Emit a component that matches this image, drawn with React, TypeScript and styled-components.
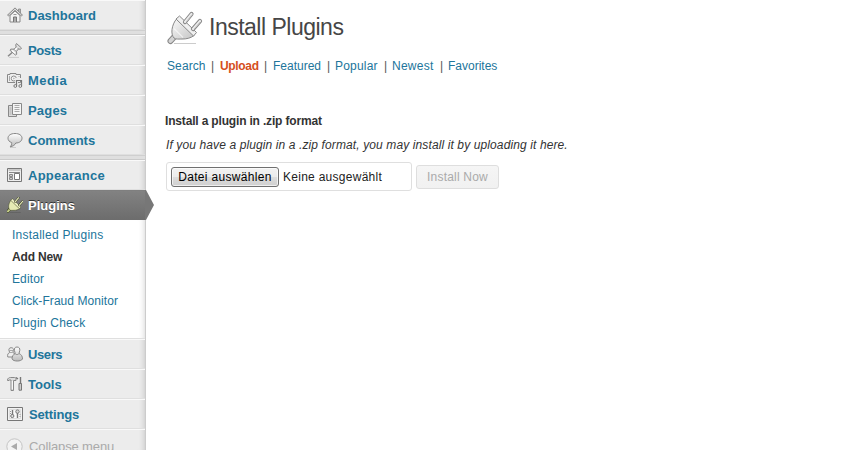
import React from "react";
import styled, { createGlobalStyle, css } from "styled-components";

const GlobalStyle = createGlobalStyle`
  html, body { margin: 0; padding: 0; height: 100%; overflow: hidden; background: #fff; }
  body { font: 12px "Liberation Sans", Arial, sans-serif; color: #333; }
  button { font-family: inherit; }
  a { color: #21759b; text-decoration: none; }
`;

const Shell = styled.div`
  display: flex;
  width: 843px;
  height: 450px;
  overflow: hidden;
`;

const Sidebar = styled.nav`
  box-sizing: border-box;
  flex: 0 0 146px;
  min-width: 0;
  height: 450px;
  background: #ececec;
  border-right: 1px solid #ccc;
  box-shadow: inset -6px 0 6px -6px rgba(0, 0, 0, 0.2);
`;

const MenuRow = styled.a<{ $current?: boolean }>`
  box-sizing: border-box;
  position: relative;
  display: flex;
  align-items: center;
  height: 30px;
  padding: 1px 0 0 7px;
  border-top: 1px solid #f9f9f9;
  border-bottom: 1px solid #dfdfdf;
  font-size: 13px;
  font-weight: bold;
  ${(p) =>
    p.$current &&
    css`
      width: 146px;
      color: #fff;
      background: linear-gradient(#828282, #6d6d6d);
      border-top-color: #7f7f7f;
      border-bottom-color: #6d6d6d;
      text-shadow: 0 -1px 0 #333;
    `}
`;

const Pointer = styled.svg`
  position: absolute;
  left: 145px;
  top: -1px;
`;

const IconSlot = styled.span`
  display: flex;
  flex: 0 0 21px;
  height: 16px;
  margin-bottom: 1px;
`;

const Label = styled.span<{ $spacing?: number; $shift?: number }>`
  letter-spacing: ${(p) => p.$spacing ?? 0}px;
  padding-left: ${(p) => p.$shift ?? 0}px;
  white-space: nowrap;
`;

const Separator = styled.div`
  box-sizing: border-box;
  height: 5px;
  background: #dfdfdf;
  border-top: 1px solid #cfcfcf;
  border-bottom: 1px solid #cacaca;
`;

const Submenu = styled.div`
  box-sizing: border-box;
  height: 119px;
  padding: 4px 0 0 12px;
  background: #fff;
  border-bottom: 1px solid #dfdfdf;
  box-shadow: inset -6px 0 6px -6px rgba(0, 0, 0, 0.2);
`;

const SubItem = styled.a<{ $current?: boolean; $spacing?: number }>`
  display: block;
  height: 22px;
  line-height: 22px;
  letter-spacing: ${(p) => p.$spacing ?? 0}px;
  ${(p) => p.$current && "color: #333; font-weight: bold;"}
`;

const Collapse = styled.div`
  display: flex;
  align-items: center;
  box-sizing: border-box;
  height: 34px;
  padding: 0 0 1px 6px;
  border-top: 1px solid #f9f9f9;
  color: #aaa;
  font-size: 13px;
  letter-spacing: -0.12px;
`;

const CollapseIcon = styled.svg`
  margin-right: 6px;
`;

const Main = styled.main`
  flex: 1;
  padding: 10px 0 0 18px;
`;

const Header = styled.header`
  display: flex;
  align-items: flex-start;
  height: 46px;
  padding-left: 2px;
`;

const Title = styled.h1`
  margin: 4px 0 0 6px;
  font-size: 23px;
  font-weight: normal;
  line-height: 26px;
  letter-spacing: -0.5px;
  color: #464646;
`;

const Tabs = styled.div`
  display: flex;
  padding-left: 3px;
  height: 20px;
  line-height: 20px;
`;

const Tab = styled.a<{ $width: number; $current?: boolean; $spacing?: number }>`
  width: ${(p) => p.$width}px;
  white-space: nowrap;
  letter-spacing: ${(p) => p.$spacing ?? 0}px;
  ${(p) => p.$current && "color: #d54e21; font-weight: bold;"}
`;

const Divider = styled.span<{ $width?: number }>`
  width: ${(p) => p.$width ?? 9}px;
  color: #555;
`;

const SectionTitle = styled.h4`
  margin: 37px 0 0 1px;
  font-size: 12px;
  line-height: 16px;
  letter-spacing: -0.17px;
`;

const Help = styled.p`
  margin: 8px 0 0 2px;
  line-height: 16px;
  font-style: italic;
  letter-spacing: 0.113px;
`;

const Form = styled.div`
  display: flex;
  align-items: center;
  margin: 9px 0 0 2px;
`;

const FileBox = styled.div`
  box-sizing: border-box;
  display: flex;
  align-items: center;
  width: 246px;
  height: 29px;
  padding-left: 4px;
  border: 1px solid #dfdfdf;
  border-radius: 3px;
  color: #222;
  letter-spacing: 0.27px;
`;

const ChooseButton = styled.button`
  box-sizing: border-box;
  width: 108px;
  height: 20px;
  margin-right: 4px;
  padding: 0;
  border: 1px solid #707070;
  border-radius: 3px;
  background: linear-gradient(#f2f2f2 0%, #ebebeb 50%, #dddddd 51%, #cfcfcf 100%);
  box-shadow: inset 0 0 0 1px rgba(255, 255, 255, 0.65);
  color: #000;
  font-size: 12px;
  line-height: 18px;
  letter-spacing: 0.32px;
  white-space: nowrap;
`;

const InstallButton = styled.button`
  box-sizing: border-box;
  width: 83px;
  height: 24px;
  margin-left: 4px;
  padding: 0;
  border: 1px solid #dedede;
  border-radius: 3px;
  background: linear-gradient(#f5f5f5, #f1f1f1);
  color: #aaa;
  font-size: 12px;
  letter-spacing: 0.2px;
  white-space: nowrap;
`;

const icons: Record<string, React.ReactNode> = {
  home: (
    <>
      <path d="M3 8.5V15h10V8.5L8 4z" fill="#f4f4f4" stroke="#888" />
      <path d="M11.5 2v3l2 1.5V2z" fill="#bbb" stroke="#888" strokeWidth=".8" />
      <path d="M.8 8.8 8 2l7.2 6.8" fill="none" stroke="#888" strokeWidth="2.2" />
      <path d="M1.4 8.2 8 2.2l6.6 6" fill="none" stroke="#f5f5f5" strokeWidth=".9" />
      <path d="M6.5 15v-5h3v5" fill="#aaa" stroke="#777" />
      <path d="M6.5 7.5h3" stroke="#999" />
    </>
  ),
  pin: (
    <>
      <path d="M2 15.4h10" stroke="#ccc" />
      <path d="m1 14.3 5-4.5" stroke="#888" strokeWidth="1.5" />
      <path d="m9.5 1.5 5 4.5-1 1.3-2-.3-2 2.3.2 3-1.2.8L3 8.3l.8-1.2 3.2.1L9.2 5l-.5-2z" fill="#ddd" stroke="#888" />
      <path d="M9.3 4.8 11.5 7M6.8 7.2l2.5 2.2" stroke="#888" />
      <path d="m8 8 2.5-2.6M5 8.5l3 2.7" stroke="#fff" strokeWidth="1.2" />
    </>
  ),
  media: (
    <>
      <path d="M.5 2.5H3v-1h6v1h4.5v8H.5z" fill="#eee" stroke="#888" />
      <path d="M2.5 4v5M11.5 4.5h1" stroke="#aaa" />
      <circle cx="6.8" cy="6.5" r="2.5" fill="#fff" stroke="#888" />
      <circle cx="6.8" cy="6.5" r="1" fill="#bbb" />
      <path d="M9.5 14V7.5h6" fill="none" stroke="#ececec" strokeWidth="3" />
      <path d="M9.5 14V8.5h5V14" fill="none" stroke="#777" strokeWidth="1.2" />
      <circle cx="8.3" cy="14" r="1.4" fill="#eee" stroke="#777" />
      <circle cx="13.3" cy="14" r="1.4" fill="#eee" stroke="#777" />
    </>
  ),
  pages: (
    <>
      <path d="M1.5 3.5h8v11h-8z" fill="#ddd" stroke="#888" />
      <path d="M2.5 6h2M2.5 8h2M2.5 10h2M2.5 12h2" stroke="#aaa" />
      <path d="M5.5 1.5h9v11h-9z" fill="#f5f5f5" stroke="#888" />
      <path d="M7.5 3.5h5M7.5 5.5h5M7.5 7.5h5M7.5 9.5h5" stroke="#aaa" />
    </>
  ),
  comment: (
    <>
      <path d="M3 15.5h6" stroke="#ccc" />
      <path
        d="M8 1.5c4.3 0 7 1.9 7 4.7s-2.5 4.8-6.2 4.8C8 13 6 14.3 3.2 14.8c1.2-1.3 1.6-2.6 1.5-4.2C2.3 9.8 1 8.3 1 6.2 1 3.4 3.7 1.5 8 1.5z"
        fill="url(#bubble)"
        stroke="#888"
      />
    </>
  ),
  appearance: (
    <>
      <path d="M.5 1.5h14v13H.5z" fill="#eee" stroke="#777" />
      <path d="M1.5 3h12" stroke="#bbb" strokeWidth="1.5" />
      <path d="M2 5.5h11" stroke="#888" />
      <path d="M2.5 7.5h3v2h-3zM2.5 10.5h3v2h-3z" fill="#ccc" stroke="#888" />
      <path d="M7.5 6.5h5v6h-5z" fill="#fff" stroke="#777" />
    </>
  ),
  users: (
    <>
      <path d="M4.2 1.7c2 0 2.5 1.5 2.2 2.8L5.8 6.5c2 1 3 2 3 4.5H.8C.2 8.500 1 7.300 2.700 6.500L2 4.500c-.4-1.400.3-2.800 2.200-2.800z" fill="#eee" stroke="#888" />
      <path d="M2.2 4.5h3.900M3 6.500h2.600" stroke="#aaa" />
      <path d="M10 1c2.200 0 3 1.500 2.800 3.300l-.8 3.200c2.400 1 3.500 2.800 3.500 5.500-1.500 2.700-9 2.700-10.500 0 0-2.700 1.200-4.500 3.200-5.500l-.8-3.200C7.200 2.500 7.900 1 10 1z" fill="url(#bubble)" stroke="#888" />
      <path d="M8 7.500c1 1.500 3 1.500 4 0" fill="none" stroke="#999" />
    </>
  ),
  tools: (
    <>
      <path d="M.5 4c.3-2 1.8-2.5 3-2.5h4c1 0 1.5.5 1.5 1v2H6.500v10H4V4H2L1 5z" fill="#ddd" stroke="#888" />
      <path d="M5.3 5v8" stroke="#fff" />
      <path d="M9 1.5 11 3M13.5 1v7" stroke="#777" strokeWidth="1.4" />
      <path d="M12 7.5h2.5v6.700H12z" fill="#ccc" stroke="#777" />
    </>
  ),
  settings: (
    <>
      <path d="M.5 1.5h15v13H.5z" fill="#f2f2f2" stroke="#777" />
      <path d="M2.5 3.5h11v9h-11z" fill="#fafafa" stroke="#ddd" />
      <path d="M5.5 4v5M10.5 7v5" stroke="#777" strokeWidth="1.4" />
      <circle cx="5.3" cy="10" r="1.6" fill="#ddd" stroke="#777" />
      <circle cx="10.5" cy="5.6" r="1.7" fill="#ddd" stroke="#777" />
      <path d="M3 5.5h1M3 7.5h1M12.5 8.5h1M12.5 10.5h1" stroke="#999" />
    </>
  ),
};

const PlugShape = ({ dark }: { dark?: boolean }) => {
  const line = dark ? "#3c421f" : "#888";
  const light = dark ? "#f3f5cf" : "#eee";
  return (
    <g transform={dark ? "translate(-1.8 -1.2) scale(.5)" : undefined}>
      <path d="M9 33.5h22" stroke={dark ? "#555" : "#ccc"} />
      <path d="m10 26-4.5 5" stroke={line} strokeWidth="6" strokeLinecap="round" />
      <path d="m10 26-4.5 5" stroke={dark ? "#c5cd8b" : "#d4d4d4"} strokeWidth="4" strokeLinecap="round" />
      <path
        d="M12 8.5 29 25.5c-3 2.5-7.5 3.5-11 3.5-4 0-7.5.5-9-1S6.5 23 7 19.5 9 11.5 12 8.5z"
        fill={dark ? "#e6ebb4" : "url(#plugBody)"}
        stroke={line}
      />
      {!dark && <path d="M9 18.5 18 27.5" stroke="#fff" strokeWidth="1.2" opacity=".6" />}
      <path d="M14.5 6 31.5 22.5l-3 3.5L11 9z" fill={dark ? "#f2f5c8" : "#f0f0f0"} stroke={line} strokeLinejoin="round" />
      <path d="m20 12 6.5-8M28 19l7-8" stroke={line} strokeWidth="4.2" strokeLinecap="round" />
      <path d="m20 12 6.5-8M28 19l7-8" stroke={light} strokeWidth="2.2" strokeLinecap="round" />
      <path d="m21 12 6-7.5M29 19l6-7" stroke={dark ? "#a6ad72" : "#bbb"} strokeWidth=".8" />
    </g>
  );
};

const MenuIcon = ({ name }: { name: string }) => (
  <svg width="16" height="16" viewBox="0 0 16 16">
    <defs>
      <linearGradient id="bubble" x2="0" y2="1">
        <stop stopColor="#fff" />
        <stop offset="1" stopColor="#bbb" />
      </linearGradient>
    </defs>
    {name === "plugin" ? <PlugShape dark /> : icons[name]}
  </svg>
);

const PageIcon = () => (
  <svg width="37" height="36" viewBox="1 0 37 36">
    <defs>
      <linearGradient id="plugBody" x1="0" y1="0" x2="1" y2="1">
        <stop stopColor="#fafafa" />
        <stop offset="1" stopColor="#c4c4c4" />
      </linearGradient>
    </defs>
    <PlugShape />
  </svg>
);

interface ItemProps {
  icon: string;
  children: string;
  current?: boolean;
  shift?: number;
  spacing?: number;
}

const Item = ({ icon, children, current, shift, spacing }: ItemProps) => (
  <MenuRow $current={current}>
    <IconSlot>
      <MenuIcon name={icon} />
    </IconSlot>
    <Label $shift={shift} $spacing={spacing}>{children}</Label>
    {current && (
      <Pointer width="10" height="30">
        <path d="M0 0h1l8 15-8 15H0z" fill="#777" />
      </Pointer>
    )}
  </MenuRow>
);

export default function App() {
  return (
    <>
      <GlobalStyle />
      <Shell>
        <Sidebar>
          <Item icon="home">Dashboard</Item>
          <Separator />
          <Item icon="pin" spacing={-0.4}>Posts</Item>
          <Item icon="media" spacing={0.45}>Media</Item>
          <Item icon="pages" spacing={0.2}>Pages</Item>
          <Item icon="comment">Comments</Item>
          <Separator />
          <Item icon="appearance" spacing={0.25}>Appearance</Item>
          <Item icon="plugin" current>Plugins</Item>
          <Submenu>
            <SubItem $spacing={0.24}>Installed Plugins</SubItem>
            <SubItem $current $spacing={-0.18}>Add New</SubItem>
            <SubItem $spacing={0.12}>Editor</SubItem>
            <SubItem $spacing={0.07}>Click-Fraud Monitor</SubItem>
            <SubItem $spacing={0.23}>Plugin Check</SubItem>
          </Submenu>
          <Item icon="users" spacing={-0.4}>Users</Item>
          <Item icon="tools">Tools</Item>
          <Item icon="settings" shift={1} spacing={-0.15}>Settings</Item>
          <Collapse>
            <CollapseIcon width="17" height="17" viewBox="0 0 17 17">
              <circle cx="8.5" cy="8.5" r="7.7" fill="#f3f3f3" stroke="#c4c4c4" />
              <path d="m5 8.5 6-3.5v7z" fill="#aaa" />
            </CollapseIcon>
            Collapse menu
          </Collapse>
        </Sidebar>
        <Main>
          <Header>
            <PageIcon />
            <Title>Install Plugins</Title>
          </Header>
          <Tabs>
            <Tab $width={44} $spacing={0.1}>Search</Tab>
            <Divider>|</Divider>
            <Tab $width={44} $current $spacing={-0.33}>Upload</Tab>
            <Divider>|</Divider>
            <Tab $width={54}>Featured</Tab>
            <Divider $width={8}>|</Divider>
            <Tab $width={49} $spacing={0.2}>Popular</Tab>
            <Divider $width={8}>|</Divider>
            <Tab $width={48} $spacing={0.25}>Newest</Tab>
            <Divider $width={8}>|</Divider>
            <Tab $width={50}>Favorites</Tab>
          </Tabs>
          <SectionTitle>Install a plugin in .zip format</SectionTitle>
          <Help>If you have a plugin in a .zip format, you may install it by uploading it here.</Help>
          <Form>
            <FileBox>
              <ChooseButton>Datei auswählen</ChooseButton>
              Keine ausgewählt
            </FileBox>
            <InstallButton disabled>Install Now</InstallButton>
          </Form>
        </Main>
      </Shell>
    </>
  );
}
